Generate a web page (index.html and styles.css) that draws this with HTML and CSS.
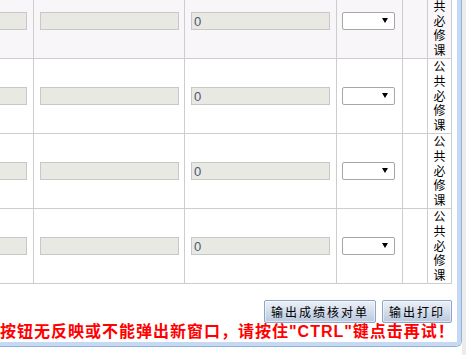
FILE: index.html
```html
<!DOCTYPE html>
<html lang="zh-CN">

<head>
    <meta charset="UTF-8">
    <meta name="viewport" content="width=device-width, initial-scale=1.0">
    <title>成绩录入</title>

    <link rel="stylesheet" href="styles.css">
</head>

<body>
    <div class="window">
        <div class="pane">
            <div class="content">

                <table class="score-table">
                    <tr class="odd">
                        <td class="col-a"><input type="text" class="field" readonly></td>
                        <td class="col-b"><input type="text" class="field" readonly></td>
                        <td class="col-c"><input type="text" class="field" value="0" readonly></td>
                        <td class="col-d">
                            <span class="select-wrap">
                                <select class="select"><option></option></select>
                                <svg class="select-arrow" viewBox="0 0 6 5"><path d="M0 0H6L3 5Z" /></svg>
                            </span>
                        </td>
                        <td class="col-e"></td>
                        <td class="col-f kind">公共必修课</td>
                    </tr>
                    <tr>
                        <td><input type="text" class="field" readonly></td>
                        <td><input type="text" class="field" readonly></td>
                        <td><input type="text" class="field" value="0" readonly></td>
                        <td>
                            <span class="select-wrap">
                                <select class="select"><option></option></select>
                                <svg class="select-arrow" viewBox="0 0 6 5"><path d="M0 0H6L3 5Z" /></svg>
                            </span>
                        </td>
                        <td></td>
                        <td class="kind">公共必修课</td>
                    </tr>
                    <tr>
                        <td><input type="text" class="field" readonly></td>
                        <td><input type="text" class="field" readonly></td>
                        <td><input type="text" class="field" value="0" readonly></td>
                        <td>
                            <span class="select-wrap">
                                <select class="select"><option></option></select>
                                <svg class="select-arrow" viewBox="0 0 6 5"><path d="M0 0H6L3 5Z" /></svg>
                            </span>
                        </td>
                        <td></td>
                        <td class="kind">公共必修课</td>
                    </tr>
                    <tr>
                        <td><input type="text" class="field" readonly></td>
                        <td><input type="text" class="field" readonly></td>
                        <td><input type="text" class="field" value="0" readonly></td>
                        <td>
                            <span class="select-wrap">
                                <select class="select"><option></option></select>
                                <svg class="select-arrow" viewBox="0 0 6 5"><path d="M0 0H6L3 5Z" /></svg>
                            </span>
                        </td>
                        <td></td>
                        <td class="kind">公共必修课</td>
                    </tr>
                </table>

                <div class="actions">
                    <button class="btn btn-check">输出成绩核对单</button>
                    <button class="btn btn-print">输出打印</button>
                </div>

                <p class="notice">按钮无反映或不能弹出新窗口，请按住"CTRL"键点击再试！</p>

            </div>
        </div>
    </div>
    <div class="scroll-edge"></div>
</body>

</html>
```

FILE: styles.css
```css
* {
    box-sizing: border-box;
}

body {
    margin: 0;
    height: 355px;
    display: flex;
    background: #fff;
    font-family: "Noto Sans CJK SC", sans-serif;
}

/* window frame */
.window {
    width: 462px;
    height: 347px;
    border-right: 1px solid #93b2dc;
    border-bottom: 1px solid #93b2dc;
    border-bottom-right-radius: 6px;
}

.pane {
    height: 100%;
    border-right: 4px solid #c6d9f3;
    border-bottom: 4px solid #c6d9f3;
    border-bottom-right-radius: 5px;
}

.content {
    height: 100%;
    overflow: hidden;
}

.scroll-edge {
    flex: 1;
    background: #ececec;
}

/* score table, scrolled a little */
.score-table {
    width: 452px;
    margin-top: -16px;
    border-spacing: 0;
    table-layout: fixed;
}

.score-table td {
    height: 75px;
    padding: 0;
    border-right: 1px solid #cdcdcd;
    border-bottom: 1px solid #cdcdcd;
    vertical-align: middle;
}

.score-table .odd td {
    background: #f8f6f8;
}

.col-a {
    width: 34px;
}

.col-b {
    width: 151px;
}

.col-c {
    width: 152px;
}

.col-d {
    width: 66px;
}

.col-e {
    width: 25px;
}

.col-f {
    width: 24px;
}

.field {
    display: block;
    width: 139px;
    height: 18px;
    margin-left: 6px;
    padding: 0 2px;
    border: 1px solid #c8c8c8;
    background: #e9e9e4;
    font: 13px "Liberation Sans", sans-serif;
    color: #4d5675;
    outline: none;
}

tr td:first-child .field {
    width: 27px;
    margin-left: 0;
    border-left: none;
}

.select-wrap {
    position: relative;
    display: block;
    width: 53px;
    height: 18px;
    margin-left: 5px;
}

.select {
    appearance: none;
    display: block;
    width: 100%;
    height: 100%;
    border: 1px solid #a6a6a6;
    border-radius: 2px;
    background: #fff;
}

.select-arrow {
    position: absolute;
    right: 7px;
    top: 6px;
    width: 6px;
    height: 5px;
    fill: #000;
}

.kind {
    padding: 0 5px;
    font-size: 12px;
    line-height: 14.8px;
    text-align: center;
    color: #000;
}

/* buttons under the table */
.actions {
    display: flex;
    justify-content: flex-end;
    gap: 6px;
    margin-top: 16px;
    padding-right: 5px;
}

.btn {
    height: 23px;
    padding: 0 6px;
    border: 1px solid #8ea6c6;
    border-radius: 2px;
    background: linear-gradient(#edf1f8, #b9c9df);
    box-shadow: inset 0 0 0 1px rgba(255, 255, 255, 0.5);
    font: 12px "Noto Sans CJK SC", sans-serif;
    letter-spacing: 2px;
    color: #000;
}

.notice {
    margin: 0;
    font: bold 16px/18px "Liberation Sans", "Noto Sans CJK SC", sans-serif;
    letter-spacing: 1px;
    color: #f00;
    white-space: nowrap;
}
```
